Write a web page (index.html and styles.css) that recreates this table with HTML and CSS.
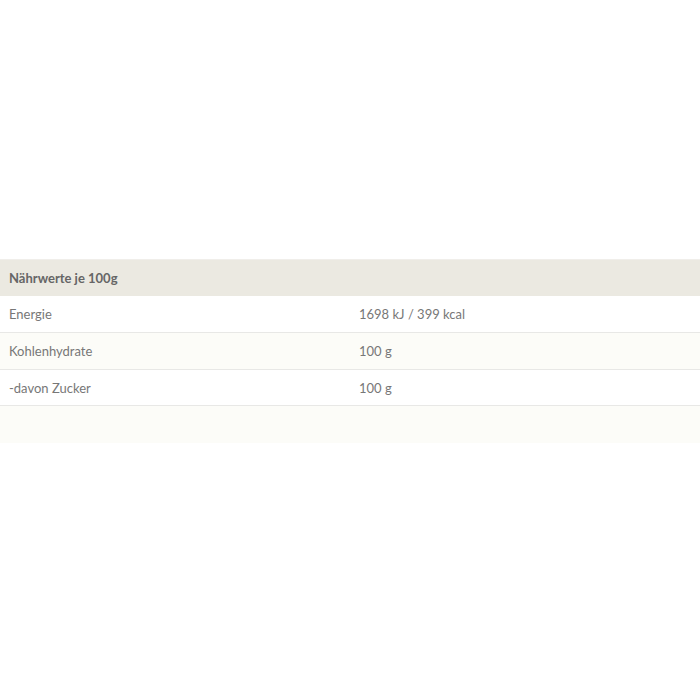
FILE: index.html
```html
<!DOCTYPE html>
<html lang="de">
<head>
<meta charset="utf-8">
<title>Nährwerte</title>
<link rel="stylesheet" href="styles.css">
</head>
<body>
<div class="page">
  <table class="nutrition">
    <thead>
      <tr><th colspan="2">Nährwerte je 100g</th></tr>
    </thead>
    <tbody>
      <tr><td>Energie</td><td>1698 kJ / 399 kcal</td></tr>
      <tr class="alt"><td>Kohlenhydrate</td><td>100 g</td></tr>
      <tr class="last"><td>-davon Zucker</td><td>100 g</td></tr>
    </tbody>
  </table>
  <div class="footer-band"></div>
</div>
</body>
</html>
```
FILE: styles.css
```css
html, body {
  margin: 0;
  padding: 0;
  background: #ffffff;
}
.page {
  padding-top: 259px;
  font-family: Lato, "Open Sans", "Liberation Sans", sans-serif;
}
.nutrition {
  width: 700px;
  border-collapse: collapse;
  table-layout: fixed;
}
.nutrition th {
  background: #ebe9e1;
  border-top: 1px solid #f0eeea;
  color: #666666;
  font-weight: 700;
  font-size: 13px;
  text-align: left;
  height: 36px;
  padding: 0 0 0 9px;
  box-sizing: border-box;
}
.nutrition td {
  color: #777777;
  font-size: 13px;
  height: 37px;
  padding: 0 0 0 9px;
  border-bottom: 1px solid #e8e8e6;
  box-sizing: border-box;
  width: 50%;
}
.nutrition tr.last td {
  height: 36px;
}
.nutrition tr.alt td {
  background: #fcfcf8;
}
.footer-band {
  height: 37px;
  background: #fcfcf8;
}
```
